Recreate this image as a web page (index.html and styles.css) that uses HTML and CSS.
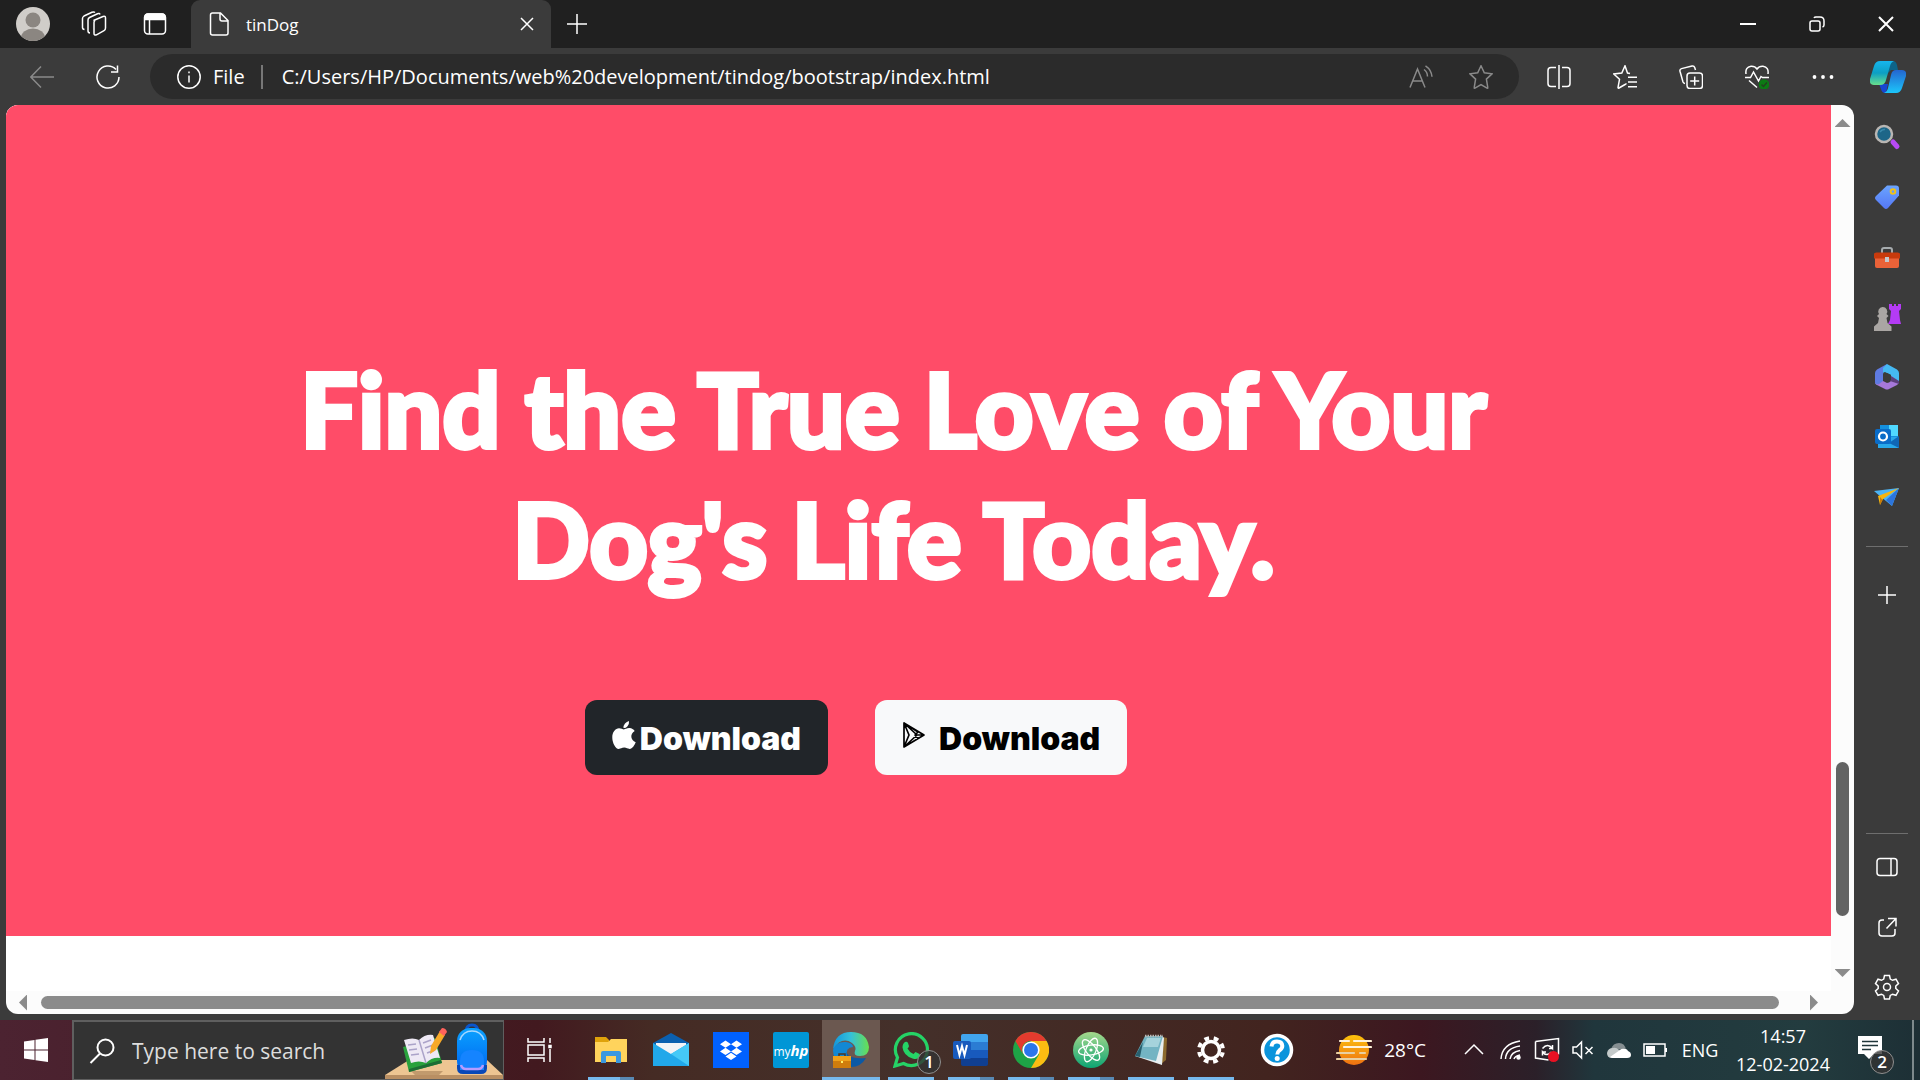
FILE: index.html
```html
<!DOCTYPE html>
<html lang="en">
<head>
<meta charset="utf-8">
<title>tinDog</title>
<link rel="stylesheet" href="styles.css">
</head>
<body>
<header class="titlebar">
  <button class="title-btn" aria-label="Profile"><svg class="i34" viewBox="0 0 34 34"><defs><clipPath id="av"><circle cx="17" cy="17" r="17"/></clipPath></defs><g clip-path="url(#av)"><path fill="#d0cdc9" d="M0 0h34v34H0z"/><circle cx="17" cy="13" r="7.5" fill="#8b8681"/><ellipse cx="17" cy="31" rx="12" ry="9.500" fill="#8b8681"/></g></svg></button>
  <button class="title-btn" aria-label="Workspaces"><svg class="i26 line" viewBox="0 0 26 26"><path d="M12.500 9.500 22 5.500q2.500-.8 2.500 1.500v10q0 1.800-1.500 2.600l-7.500 4.200q-2.500 1-2.500-1.500V11.500q0-1.500 1-2z"/><path d="M19 3.500q-.5-1.500-2.500-.8L8.500 6.500Q7 7.300 7 9v11q0 1.800 2 2"/><path d="M14 1.500q-1-1-3-.2L3 5Q1.500 6 1.500 7.500v9q0 1.800 2 2"/></svg></button>
  <button class="title-btn" aria-label="Tab actions"><svg class="i24 line" viewBox="0 0 24 24"><rect x="1.500" y="2" width="21" height="20" rx="3.500"/><path fill="#fff" d="M2 7.500V5q0-3 3-3h14q3 0 3 3v2.500z"/><path d="M6.500 8v14"/></svg></button>
  <div class="tab">
    <svg class="i24 line" viewBox="0 0 24 24"><path d="M5.500 1h8L21 8.500V21q0 2-2 2H5.500q-2 0-2-2V3q0-2 2-2zM13 1v6q0 2 2 2h6"/></svg>
    <span class="tab-title">tinDog</span>
    <button class="tab-close" aria-label="Close tab"><svg class="i14 line" viewBox="0 0 14 14"><path d="m1 1 12 12M13 1 1 13"/></svg></button>
  </div>
  <button class="new-tab" aria-label="New tab"><svg class="i22 line" viewBox="0 0 22 22"><path d="M11 1v20M1 11h20"/></svg></button>
  <div class="window-controls">
    <button class="win-btn" aria-label="Minimize"><svg class="i16 line2" viewBox="0 0 16 16"><path d="M0 8h16"/></svg></button>
    <button class="win-btn" aria-label="Restore"><svg class="i16 line" viewBox="0 0 16 16"><rect x="1" y="5" width="10" height="10" rx="2"/><path d="M5 2q.5-1 2-1h4q4 0 4 4v4q0 1.500-1.500 2"/></svg></button>
    <button class="win-btn" aria-label="Close"><svg class="i16 line2" viewBox="0 0 16 16"><path d="m1 1 14 14M15 1 1 15"/></svg></button>
  </div>
</header>

<nav class="toolbar">
  <button class="tool-btn" aria-label="Back"><svg class="i24 line dim" viewBox="0 0 24 24"><path d="M24 12H1M11 1.500.8 12 11 22.500"/></svg></button>
  <button class="tool-btn" aria-label="Refresh"><svg class="i24 line" viewBox="0 0 24 24"><path d="M20 4.500A11 11 0 1 0 23 12M21.500.5v6.500h-6.500"/></svg></button>
  <div class="address">
    <svg class="i24 line" viewBox="0 0 24 24"><circle cx="12" cy="12" r="11.200"/><path d="M12 10.500v7M12 6.500v1.700"/></svg>
    <label class="scheme" for="url">File</label>
    <span class="divider"></span>
    <input class="url" id="url" type="text" value="C:/Users/HP/Documents/web%20development/tindog/bootstrap/index.html">
    <button class="addr-btn" aria-label="Read aloud"><svg class="i24 line dim" viewBox="0 0 24 24"><path d="M1 22.500 8.500 4l7.500 18.500M3.800 16h9.600M15 4.500q3.500 2.500 3.500 7M16.500.800q6 4 6.500 11"/></svg></button>
    <button class="addr-btn" aria-label="Add to favourites"><svg class="i24 line dim" viewBox="0 0 24 24"><path d="M12 .8l3.300 7 7.700 1-5.600 5.300 1.400 8.600q.2.800-.8.400L12 19.500l-6 3.600q-1 .4-.8-.4l1.400-8.600L1 8.800l7.700-1z"/></svg></button>
  </div>
  <button class="tool-btn" aria-label="Split screen"><svg class="i24 line" viewBox="0 0 24 24"><path d="M9 2.500H4Q1 2.500 1 5.500v13q0 3 3 3h5M15 2.500h5q3 0 3 3v13q0 3-3 3h-5M12 0v24"/></svg></button>
  <button class="tool-btn" aria-label="Favourites"><svg class="i24 line" viewBox="0 0 24 24"><path d="M17 8.500 14.500 8 12 .8 8.800 8 .8 9l5.700 5.300L5 22.500q0 1 1 .5l6-3.500 1.500-1M15 12.200h9M15 17h9M15 21.800h9"/></svg></button>
  <button class="tool-btn" aria-label="Collections"><svg class="i24 line" viewBox="0 0 24 24"><rect x="8" y="8" width="15.500" height="15.500" rx="3"/><path d="M15.700 11.500v9M11.200 16h9M16.500 5 15.700 2.500Q15 .5 13 1L2.500 3.600q-2 .6-1.500 2.600L4 17q.5 1.200 2 1.400"/></svg></button>
  <button class="tool-btn" aria-label="Browser essentials"><svg class="i24 line" viewBox="0 0 24 24"><path d="M1 9Q0 2 6 1.200 10 1 12 4q2-3 6-2.800Q24 2 23 9M0 12.500h5.500L8.500 7l5 9 2.500-4.500 1.500 1H24M4 15.500l8 7"/><circle cx="19" cy="19.500" r="5.300" fill="#0c7a14" stroke="none"/><path stroke="#24401f" d="m16.500 19.500 2 2 3.500-4"/></svg></button>
  <button class="tool-btn" aria-label="Settings and more"><svg class="i24" viewBox="0 0 24 24" fill="#fff"><circle cx="3.500" cy="12" r="1.900"/><circle cx="12" cy="12" r="1.900"/><circle cx="20.500" cy="12" r="1.900"/></svg></button>
  <button class="copilot" aria-label="Copilot"><svg class="i36" viewBox="0 0 36 36"><defs><linearGradient id="cp1" x2="0" y2="1"><stop stop-color="#16b6ee"/><stop offset=".5" stop-color="#0c9fc4"/><stop offset="1" stop-color="#68e08c"/></linearGradient><linearGradient id="cp2" x2="0" y2="1"><stop stop-color="#2465cf"/><stop offset="1" stop-color="#1cc6fb"/></linearGradient></defs><path fill="#0d6488" d="M20 2h3q3 0 4 4l1 5h-7l-4 4z"/><path fill="#1746d0" d="M9 25h9l-2 9h-1q-3 0-4-4z"/><path fill="url(#cp1)" d="M10 2h14q-3 1-4 5l-4 14q-1 5-6 5H4q-5 0-4-6L4 7q1.500-5 6-5z"/><path fill="url(#cp2)" d="M26 11h6q5 0 4 6l-4 12q-1.500 5-6 5H14q3-1 4-5l3-13q1-5 5-5z"/></svg></button>
</nav>

<div class="workspace">
  <div class="frame">
    <main class="page">
      <section class="hero">
        <h1 class="hero-title">Find the True Love of Your<br>Dog's Life Today.</h1>
        <div class="hero-actions">
          <button class="download download-dark"><svg class="brand" viewBox="0 0 24 28"><path fill="#fff" d="M17 0q.4 3-1.500 5.200Q13.700 7.300 11.500 7 11.300 4.500 13 2.500 14.700.5 17 0zM12 8.400c1 0 3-1.500 5.500-1.300 2.300.2 4 1.200 5.200 2.900-5 3-4.200 9.300 1 11.200-1 2.900-3.500 6.600-6 6.700-2.300 0-3-1.300-5.500-1.300-2.600 0-3.300 1.300-5.500 1.300C3.500 27.900.5 22 .3 17 0 11 3.500 7.400 7 7.300c2 0 3.800 1.100 5 1.100z"/></svg>Download</button>
          <button class="download download-light"><svg class="brand" viewBox="0 0 24 28"><path fill="none" stroke="#000" stroke-width="1.700" stroke-linejoin="round" d="M2 2v24l20-12zM2 2l13 12L2 26M2 2l5 12-5 12M2 2l14 9-3 3 3 3.500M15 14h7"/></svg><span class="play-label">Download</span></button>
        </div>
      </section>
    </main>
    <div class="scroll-v"><span class="arrow up"></span><span class="track-v"><span class="thumb-v"></span></span><span class="arrow down"></span></div>
    <div class="scroll-h"><span class="arrow left"></span><span class="track-h"><span class="thumb-h"></span></span><span class="arrow right"></span></div>
  </div>

  <aside class="sidebar">
    <button class="side-btn" aria-label="Search"><svg class="i28" viewBox="0 0 28 28"><path stroke="#b84af5" stroke-width="5" stroke-linecap="round" d="m20 19 4 4.500"/><circle cx="11" cy="11" r="8" fill="#1d6688" stroke="#b9b6b3" stroke-width="2.500"/><path stroke="#3b8aac" stroke-width="1.500" fill="none" d="M7 9q2-3 5-2.500"/></svg></button>
    <button class="side-btn" aria-label="Shopping"><svg class="i28" viewBox="0 0 28 28"><defs><linearGradient id="tg" x2="0" y2="1"><stop stop-color="#6aa4ff"/><stop offset="1" stop-color="#5577f5"/></linearGradient></defs><path fill="url(#tg)" d="M14 2.500h9q3 0 3 3v7L15 25q-2 2-4 0l-8-8q-2-2 0-4z"/><circle cx="20" cy="8.500" r="2.300" fill="none" stroke="#efc21b" stroke-width="2"/></svg></button>
    <button class="side-btn" aria-label="Tools"><svg class="i28" viewBox="0 0 28 28"><path fill="none" stroke="#a6abae" stroke-width="2" d="M9 10V7q0-2 2-2h6q2 0 2 2v3"/><path fill="#ea6238" d="M2 13h24v10q0 2-2 2H4q-2 0-2-2z"/><path fill="#c83a0c" d="M3 9.500h22l2 1v5H1v-5z"/><path fill="#c5c8cc" d="M12 14h4v5h-4z"/></svg></button>
    <button class="side-btn" aria-label="Games"><svg class="i28" viewBox="0 0 28 28"><path fill="#b43bf5" d="M16 1h3v2h2V1h2v2h2V1h3v5l-2 2 1 9 1 4H15l2-4 1-9-2-2z"/><path fill="#aaa6a3" d="M9.500 4a4.500 4.500 0 0 1 4 7l2 2-2 2 1 5 4 3.500V28H1v-4.500L5 20l1-5-2-2 2-2a4.500 4.500 0 0 1 3.500-7z"/></svg></button>
    <button class="side-btn" aria-label="Microsoft 365"><svg class="i28" viewBox="0 0 28 28"><path fill="#5f7be2" d="M14 1 4 6.500Q2 8 2 10v9q0 3 3 3l5-3V10q0-2 2-3z"/><path fill="#45b9f2" d="m14 1 10 5.500q2 1.500 2 3.500v9l-8-3v-4l-6-3q-2 0-2 2V5z"/><path fill="#a678da" d="M2 19q1 3 4 2l4-3 4 2q2 0 4-2v-5l8 5.500q0 2-2 3.500l-8 4q-2 1.200-4 0L4 22q-2-1-2-3z"/><path fill="#5b3f7c" d="m18 13 8 5v3l-9-3z"/><path fill="#3b3b3b" d="m14 10 4 2v5l-4 2-4-2v-5z"/></svg></button>
    <button class="side-btn" aria-label="Outlook"><svg class="i28" viewBox="0 0 28 28"><path fill="#1490df" d="M7 2h18v14H7z"/><path fill="#50d9ff" d="M16 2h9v11h-9z"/><path fill="#28a8ea" d="M5 14h21v11H5z"/><path fill="#1066b5" d="m26 13-10 7 10 5z"/><rect x="2" y="6" width="16" height="15" rx="2" fill="#0a6cc8"/><circle cx="10" cy="13.500" r="4" fill="none" stroke="#fff" stroke-width="2.200"/></svg></button>
    <button class="side-btn" aria-label="Drop"><svg class="i28" viewBox="0 0 28 28"><path fill="#4cb4f5" d="M1 8 26 5 19 23l-6-5-5-4z"/><path fill="#2c74dc" d="M26 5 13 17l6 6z"/><path fill="#f7b50e" d="M26 5 5 13l2 9 3-6z"/><path fill="#c87b08" d="m7 14 0 8 2.500-5z"/></svg></button>
    <span class="side-rule"></span>
    <button class="side-btn" aria-label="Customise"><svg class="i20 line" viewBox="0 0 20 20"><path d="M10 1v18M1 10h18"/></svg></button>
    <span class="side-rule side-rule-low"></span>
    <button class="side-btn" aria-label="Hide sidebar"><svg class="i24 line" viewBox="0 0 24 24"><rect x="2" y="3.500" width="20" height="17" rx="3"/><path d="M16 3.500v17"/></svg></button>
    <button class="side-btn" aria-label="Open link"><svg class="i24 line" viewBox="0 0 24 24"><path d="M9 5H7Q4 5 4 8v10q0 3 3 3h10q3 0 3-3v-4M13 3.500h8v8M21 3.500 11.500 13.500"/></svg></button>
    <button class="side-btn" aria-label="Settings"><svg class="i26 line" viewBox="0 0 26 26"><circle cx="13" cy="13" r="3.500"/><path d="M10.500 1.500h5l.8 3.600 2.200 1.200 3.500-1.100 2.500 4.300-2.700 2.500v2.500l2.700 2.500-2.500 4.300-3.500-1.100-2.200 1.200-.8 3.600h-5l-.8-3.600-2.200-1.200-3.500 1.100L1.500 17l2.700-2.500V12L1.500 9.500 4 5.200l3.500 1.100 2.200-1.200z"/></svg></button>
  </aside>
</div>

<footer class="taskbar">
  <button class="start" aria-label="Start"><svg class="i26" viewBox="0 0 26 26" fill="#fff"><path d="M1 4.500 11.500 3v9.500H1zM12.500 2.800 25 1v11.500H12.500zM1 13.500h10.500V23L1 21.500zM12.500 13.500H25V25l-12.500-1.800z"/></svg></button>
  <div class="search">
    <svg class="i26 line2" viewBox="0 0 26 26"><circle cx="16.500" cy="9.500" r="8"/><path d="M11 15.500 1.500 25"/></svg>
    <input class="search-input" type="text" aria-label="Search" placeholder="Type here to search">
    <svg class="search-art" viewBox="0 0 118 56"><defs><linearGradient id="bp" x2="0" y2="1"><stop stop-color="#0aa2ff"/><stop offset="1" stop-color="#0062f0"/></linearGradient></defs><path fill="#edc592" d="M24 37h78l16 15H0z"/><path fill="#b98f63" d="M0 52h118v4H0z"/><path fill="#c19a6d" d="M26 48h32l-4 4H30z"/><path fill="#29a13c" d="m18 24 32-9 7 25-33 9z"/><path fill="#1d6c35" d="m24 46 32-9 1 3-33 9z"/><path fill="#eee9f5" d="M19 17q9-3 15 0 6-6 14-5l7 23q-8-1-14 5-7-3-15 0z"/><path fill="none" stroke="#aba3c9" stroke-width="1.500" d="m34 17 7 23M23 22l8-1M24 27l8-1M26 32l8-1M38 20l8-3M40 25l8-3M42 30l8-3"/><path fill="#f7a928" d="m55 8 5 4-9 15-6 4 1-8z"/><path fill="#ff625c" d="m57 5q4 0 5 4l-3 4-5-4z"/><path fill="none" stroke="#0a55cb" stroke-width="3" d="M81 9q0-7 6-7t6 7"/><rect x="72" y="5" width="30" height="46" rx="13" fill="url(#bp)"/><path fill="#0848b8" d="M72 42v3q0 6 6 6h18q6 0 6-6v-3z"/><path fill="#1584ff" d="M75 47V38q0-11 12-11t12 11v9z"/><path fill="none" stroke="#a7d8ff" stroke-width="1.600" d="M75 17q3-9 12-9t12 9"/><path fill="none" stroke="#b79bff" stroke-width="2.500" d="M76 42q1 4 5 4h12q4 0 5-4"/></svg>
  </div>
  <button class="task-view" aria-label="Task view"><svg class="i26" viewBox="0 0 26 26" fill="none" stroke="#fff" stroke-width="1.500"><path d="M2 1v4h16V1M2 25v-4h16v4M2 8h16v10H2zM24 1v5M24 12v13"/><path fill="#fff" d="M23 8.500h2v2h-2z"/></svg></button>
  <nav class="apps">
    <button class="app stacked" aria-label="File Explorer"><svg class="i36" viewBox="0 0 36 36"><path fill="#dfa20b" d="M2 5h11l3 3v5H2z"/><path fill="#ffd35c" d="M2 10h13l3-3h16v23H2z"/><path fill="#3a98e0" d="M10 19h16q2 0 2 2v10h-5v-7H13v7H8V21q0-2 2-2z"/></svg></button>
    <button class="app idle" aria-label="Mail"><svg class="i36" viewBox="0 0 36 36"><path fill="#0b60b0" d="M0 11 18 1l18 10v5H0z"/><path fill="#f3f3f6" d="M3 11h30v8L18 25 3 19z"/><path fill="#21a8ea" d="m0 11 18 11 18-11v23H0z"/><path fill="#45c9f7" d="m36 11-18 11 18 12z"/></svg></button>
    <button class="app idle" aria-label="Dropbox"><svg class="i36" viewBox="0 0 36 36"><path fill="#0061ff" d="M0 0h36v36H0z"/><path fill="#fff" d="m12.500 8.500 5.500 3.700-5.500 3.600L7 12.200zM23.500 8.500l5.500 3.700-5.500 3.600-5.500-3.600zM12.500 15.800l5.500 3.600-5.500 3.700L7 19.400zM23.500 15.800l5.500 3.600-5.500 3.700-5.500-3.700zM18 20.800l5.500 3.600L18 28l-5.500-3.600z"/></svg></button>
    <button class="app idle" aria-label="myHP"><span class="myhp">my<i class="hp">hp</i></span></button>
    <button class="app active" aria-label="Microsoft Edge"><svg class="i36" viewBox="0 0 36 36"><defs><linearGradient id="eg"><stop stop-color="#1296dc"/><stop offset=".5" stop-color="#35c1d8"/><stop offset="1" stop-color="#68e04e"/></linearGradient></defs><path fill="#0c59a4" d="M13 14q-3 14 20 12-5 9-15 9-12 0-14-12z"/><path fill="#1288d4" d="M0 18q3-9 13-8 7 1 7 5-8 0-6 10l-4 8Q0 29 0 18z"/><path fill="url(#eg)" d="M0 17Q2 0 18 0t18 15q0 9-9 9-7 0-5-5 2-4-3-8Q9 4 0 17z"/><path fill="#d07d0c" d="M0 24h18v12H0z"/><path fill="#f0a11a" d="M0 24h18v5H0z"/><path fill="#fff36a" d="M8 29h2v2H8z"/><path fill="none" stroke="#4a3728" stroke-width="1.500" d="M6 24v-2h6v2"/></svg></button>
    <button class="app" aria-label="WhatsApp"><svg class="i36" viewBox="0 0 36 36"><path fill="none" stroke="#25d366" stroke-width="3.200" d="M2 34 4.500 25.500A16 16 0 1 1 10.500 31.500z"/><path fill="#25d366" d="M12 10q2-1 3 1l1 3q0 1-1.500 2.500 2 4 6 5.500l2-2 4 2q1 1 0 3-2 3-7 1.500-9-3-10-11 0-4 2.500-5.500z"/></svg><span class="count">1</span></button>
    <button class="app stacked" aria-label="Word"><svg class="i36" viewBox="0 0 36 36"><path fill="#41a5ee" d="M8 4q0-2 2-2h23q2 0 2 2v6H8z"/><path fill="#2b7cd3" d="M8 10h27v8H8z"/><path fill="#185abd" d="M8 18h27v8H8z"/><path fill="#103f91" d="M8 26h27v6q0 2-2 2H10q-2 0-2-2z"/><rect y="9" width="18" height="18" rx="2" fill="#185abd"/><path fill="none" stroke="#fff" stroke-width="2" d="m4 13 2.500 10L9 14l2.500 9L14 13"/></svg></button>
    <button class="app stacked" aria-label="Chrome"><svg class="i36" viewBox="0 0 36 36"><circle cx="18" cy="18" r="18" fill="#1ea446"/><path fill="#fbbc12" d="M18 9h15.600A18 18 0 0 1 18 36l8-13.500z"/><path fill="#e33b2e" d="M2.400 9a18 18 0 0 1 31.200 0H18a9 9 0 0 0-7.800 13.500z"/><circle cx="18" cy="18" r="8.600" fill="#fff"/><circle cx="18" cy="18" r="7" fill="#2a76ea"/></svg></button>
    <button class="app stacked" aria-label="Atom"><svg class="i36" viewBox="0 0 36 36"><defs><linearGradient id="at" x2="0" y2="1"><stop stop-color="#a5d88c"/><stop offset="1" stop-color="#0da573"/></linearGradient></defs><circle cx="18" cy="18" r="18" fill="url(#at)"/><g fill="none" stroke="#fff" stroke-width="1.300"><ellipse cx="18" cy="18" rx="12.500" ry="5" transform="rotate(-8 18 18)"/><ellipse cx="18" cy="18" rx="12.500" ry="5" transform="rotate(52 18 18)"/><ellipse cx="18" cy="18" rx="12.500" ry="5" transform="rotate(112 18 18)"/></g><circle cx="18" cy="18" r="1.600" fill="#fff"/></svg></button>
    <button class="app" aria-label="Notepad"><svg class="i36" viewBox="0 0 36 36"><path fill="#8c6a2e" d="m30 5 4 1-1 22-5 4z"/><path fill="#e8eef0" d="m29 4 2 2-2 27-27-9z"/><path fill="#73b4c3" d="M12 4h18l-7 25-21-5z"/><path fill="#a5d3dc" d="M14 6h14l-3 9H10z"/><path fill="#28606f" d="m2 24 8-14-3 15z"/><path stroke="#b8b8b5" stroke-width="2.500" stroke-dasharray="1.500 1" d="M12 4h18"/></svg></button>
    <button class="app" aria-label="Settings"><svg class="i28" viewBox="0 0 28 28"><circle cx="14" cy="14" r="8.500" fill="none" stroke="#fff" stroke-width="3.500"/><circle cx="14" cy="14" r="12" fill="none" stroke="#fff" stroke-width="4" stroke-dasharray="4.700 4.720" stroke-dashoffset="7"/></svg></button>
    <button class="app help idle" aria-label="Help"><svg class="i34" viewBox="0 0 34 34"><circle cx="17" cy="17" r="14.500" fill="#0a94dc" stroke="#fff" stroke-width="3.500"/><path fill="none" stroke="#fff" stroke-width="4" d="M11.500 13.500Q12 8.500 17 8.500t5.300 4.500q0 2.500-3 4.500-2 1.500-2 4"/><circle cx="17.200" cy="25.500" r="2.500" fill="#fff"/></svg></button>
  </nav>
  <div class="tray">
    <button class="weather"><svg class="i36" viewBox="0 0 36 36"><defs><linearGradient id="wt" x2="0" y2="1"><stop stop-color="#fcc20c"/><stop offset="1" stop-color="#ee7112"/></linearGradient></defs><circle cx="18" cy="18" r="15" fill="url(#wt)"/><g stroke-width="2.200" stroke-linecap="round"><path stroke="#fff3da" d="M4 9h9M18 9h17M8 15h27"/><path stroke="#e9cfa0" d="M1 21h17M24 21h5M1 27h29"/></g></svg>28°C</button>
    <button class="tray-btn chevron" aria-label="Hidden icons"><svg class="i20 line" viewBox="0 0 20 20"><path d="m1 14 9-9 9 9"/></svg></button>
    <button class="tray-btn" aria-label="Network"><svg class="i22 line" viewBox="0 0 22 22"><path d="M1 20Q2 5 20 2M5.500 20Q6 9 20 7M10 20q1-7 10-8.500M14 20q1-3 6-4"/><circle cx="18.500" cy="18.500" r="1.500" fill="#fff"/></svg></button>
    <button class="tray-btn" aria-label="Updates"><svg class="i26 line" viewBox="0 0 26 26"><path d="m1.500 4.500 23-3v16M1.500 4.500V21l13 2M8.500 11.500q5-6 10 0v-3.500M18.500 11.500H15M17.500 15q-5 5-9 0v3.500M8.500 15H12"/><circle cx="19.500" cy="19.500" r="5.500" fill="#e81123" stroke="none"/></svg></button>
    <button class="tray-btn" aria-label="Muted"><svg class="i22 line" viewBox="0 0 22 22"><path d="M1 8h3.500L9.500 3v16l-5-5H1zM13.500 8l7 7M20.500 8l-7 7"/></svg></button>
    <button class="tray-btn" aria-label="OneDrive"><svg class="i24" viewBox="0 0 24 24"><path fill="#858e91" d="M4 11q2-6 8-6t7 7z"/><path fill="#c4caca" d="M5 20q-5 0-5-5 1-5 6-5 3-1 6 2l7 3z"/><path fill="#fff" d="m3 19 10-7q2-2 5-1 2-.5 3 2 3 1 3 4 0 3-4 3H5z"/></svg></button>
    <button class="tray-btn" aria-label="Battery"><svg class="i24" viewBox="0 0 24 24"><rect x="1" y="6" width="21" height="12" fill="none" stroke="#fff" stroke-width="1.500"/><path fill="#fff" d="M3 8h9v8H3zM22 10h2v4h-2z"/></svg></button>
    <button class="tray-btn lang">ENG</button>
    <button class="clock"><time>14:57</time><span>12-02-2024</span></button>
    <button class="notify" aria-label="Notifications"><svg class="i26" viewBox="0 0 26 26"><path fill="#fff" d="M1 1h24v18H17l-5 5-5-5H1z"/><path stroke="#20363a" stroke-width="1.500" d="M5 6.500h16M5 10.500h16M5 14.500h9"/></svg><span class="count">2</span></button>
    <span class="show-desktop"></span>
  </div>
</footer>
</body>
</html>
```

FILE: styles.css
```css
* { box-sizing: border-box; }
body {
  margin: 0;
  height: 100vh;
  display: flex;
  flex-direction: column;
  overflow: hidden;
  background: #3b3b3b;
  color: #fff;
  font-family: "Open Sans", "Noto Sans", sans-serif;
  font-size: 18px;
}
button {
  display: flex;
  align-items: center;
  justify-content: center;
  flex-shrink: 0;
  margin: 0;
  padding: 0;
  border: 0;
  background: none;
  color: inherit;
  font: inherit;
}
input {
  min-width: 0;
  padding: 0;
  border: 0;
  outline: 0;
  background: none;
  color: inherit;
  font: inherit;
}
svg { flex-shrink: 0; }
.i14 { width: 14px; height: 14px; }
.i16 { width: 16px; height: 16px; }
.i20 { width: 20px; height: 20px; }
.i22 { width: 22px; height: 22px; }
.i24 { width: 24px; height: 24px; }
.i26 { width: 26px; height: 26px; }
.i28 { width: 28px; height: 28px; }
.i34 { width: 34px; height: 34px; }
.i36 { width: 36px; height: 36px; }
.line { fill: none; stroke: #fff; stroke-width: 1.5; }
.line2 { fill: none; stroke: #fff; stroke-width: 2; }
.dim { stroke: #8a8a8a; }

/* Title bar */
.titlebar {
  display: flex;
  flex-shrink: 0;
  height: 48px;
  padding-left: 2px;
  background: #202020;
}
.title-btn { width: 61px; }
.tab {
  display: flex;
  align-items: center;
  width: 360px;
  margin-left: 6px;
  padding: 0 17px 0 16px;
  border-radius: 9px 9px 0 0;
  background: #3b3b3b;
}
.tab-title { flex: 1; padding-left: 15px; font-size: 17px; }
.new-tab { width: 52px; }
.window-controls { display: flex; margin-left: auto; }
.win-btn { width: 69px; }

/* Toolbar */
.toolbar {
  display: flex;
  flex-shrink: 0;
  height: 57px;
  padding-left: 9px;
}
.tool-btn { width: 66px; }
.copilot { width: 64px; }
.address {
  display: flex;
  flex: 1;
  align-items: center;
  margin: 6px 7px 6px 9px;
  padding: 0 8px 0 27px;
  border-radius: 23px;
  background: #2b2b2b;
  font-size: 20px;
}
.scheme { padding-left: 12px; }
.divider { width: 2px; height: 24px; margin: 0 19px 0 16px; background: #777; }
.url { flex: 1; }
.addr-btn { width: 60px; }

/* Browser window body */
.workspace { display: flex; flex: 1; min-height: 0; }
.frame {
  display: grid;
  flex: 1;
  grid-template: 1fr 23px / 1fr 23px;
  margin: 0 0 6px 6px;
  border-radius: 12px;
  background: #fcfcfc;
  overflow: hidden;
}
.page { min-height: 0; background: #fff; overflow: hidden; }
.hero {
  padding: 239px 50px 161px 0;
  background: #ff4c68;
  text-align: center;
}
.hero-title {
  margin: 0;
  font-family: Lato, sans-serif;
  font-size: 102px;
  font-weight: 900;
  line-height: 130px;
  -webkit-text-stroke: 4px #fff;
}
.hero-actions {
  display: flex;
  justify-content: center;
  gap: 47px;
  margin-top: 96px;
  padding-right: 75px;
}
.download {
  height: 75px;
  padding: 2px 27px 0;
  border-radius: 12px;
  font-family: Inter, sans-serif;
  font-size: 32px;
  font-weight: 900;
}
.download-dark { background: #212529; }
.download-light { background: #f8f9fa; color: #000; }
.brand { width: 24px; height: 28px; margin: 0 4px 8px 0; }
.play-label { padding-left: 9px; }

.scroll-v { display: flex; flex-direction: column; align-items: center; padding: 14px 0; }
.scroll-h { display: flex; align-items: center; padding: 0 13px; }
.track-v { display: grid; flex: 1; grid-template-rows: 635fr 154fr 53fr; }
.track-h { display: grid; flex: 1; grid-template-columns: 14fr 1738fr 31fr; }
.thumb-v { grid-row: 2; width: 13px; border-radius: 7px; background: #636363; }
.thumb-h { grid-column: 2; height: 13px; border-radius: 7px; background: #8b8b8b; }
.arrow { background: #8b8b8b; }
.up, .down { width: 16px; height: 8px; }
.left, .right { width: 8px; height: 16px; }
.up { clip-path: polygon(50% 0, 100% 100%, 0 100%); }
.down { clip-path: polygon(0 0, 100% 0, 50% 100%); }
.left { clip-path: polygon(100% 0, 100% 100%, 0 50%); }
.right { clip-path: polygon(0 0, 100% 50%, 0 100%); }

.sidebar {
  display: flex;
  flex-direction: column;
  align-items: center;
  width: 66px;
  padding: 2px 0 3px;
}
.side-btn { width: 60px; height: 60px; }
.side-rule { width: 42px; height: 1px; margin: 19px 0 18px; background: #6e6e6e; }
.side-rule-low { margin: auto 0 3px; }

/* Taskbar */
.taskbar {
  display: flex;
  flex-shrink: 0;
  height: 60px;
  background: linear-gradient(90deg, #4c2331 0, #42191f 28%, #452b24 34%, #44302a 47%, #42241f 66%, #3c1720 74%, #2b2029 80%, #20363c 83%, #233c3f 94%, #1d2f35 100%);
}
.start { width: 72px; }
.search {
  display: flex;
  align-items: center;
  width: 432px;
  padding-left: 15px;
  border: 2px solid #5f5f5f;
  border-right-width: 1px;
  border-bottom-width: 1px;
  background: #333;
}
.search-input { flex: 1; padding-left: 17px; font-size: 21px; }
.search-input::placeholder { color: #ddd; opacity: 1; }
.search-art { align-self: flex-end; width: 118px; height: 56px; }
.task-view { width: 70px; }
.apps { display: flex; gap: 2px; padding-left: 8px; }
.app { position: relative; width: 58px; }
.app::after {
  content: "";
  position: absolute;
  right: 6px;
  bottom: 0;
  left: 6px;
  height: 3px;
  background: #76b9ed;
}
.stacked::after { background: linear-gradient(90deg, #76b9ed 70%, #5989b3 70%); }
.idle::after { display: none; }
.active { background: #6b5850; }
.active::after { right: 0; left: 0; }
.help { width: 70px; }
.myhp {
  width: 36px;
  height: 36px;
  border-radius: 2px;
  background: #0096d6;
  font-size: 12px;
  line-height: 36px;
}
.hp { font-size: 15px; font-weight: 700; }
.count {
  position: absolute;
  right: -1px;
  bottom: 6px;
  width: 24px;
  height: 24px;
  border: 1px solid #8f8f8f;
  border-radius: 50%;
  background: #333c;
  font-size: 17px;
  font-weight: 600;
  line-height: 22px;
  text-align: center;
}
.tray { display: flex; margin-left: auto; }
.weather { gap: 12px; padding-right: 29px; font-size: 19px; }
.tray-btn { width: 36px; }
.chevron { width: 38px; }
.lang { width: 58px; padding-right: 4px; font-size: 18px; }
.clock {
  flex-direction: column;
  width: 104px;
  font-size: 18px;
  line-height: 28px;
}
.notify { position: relative; width: 77px; padding: 0 7px 4px 0; }
.notify .count { right: 18px; }
.show-desktop { width: 8px; border-left: 2px solid #7d898c; }
```
